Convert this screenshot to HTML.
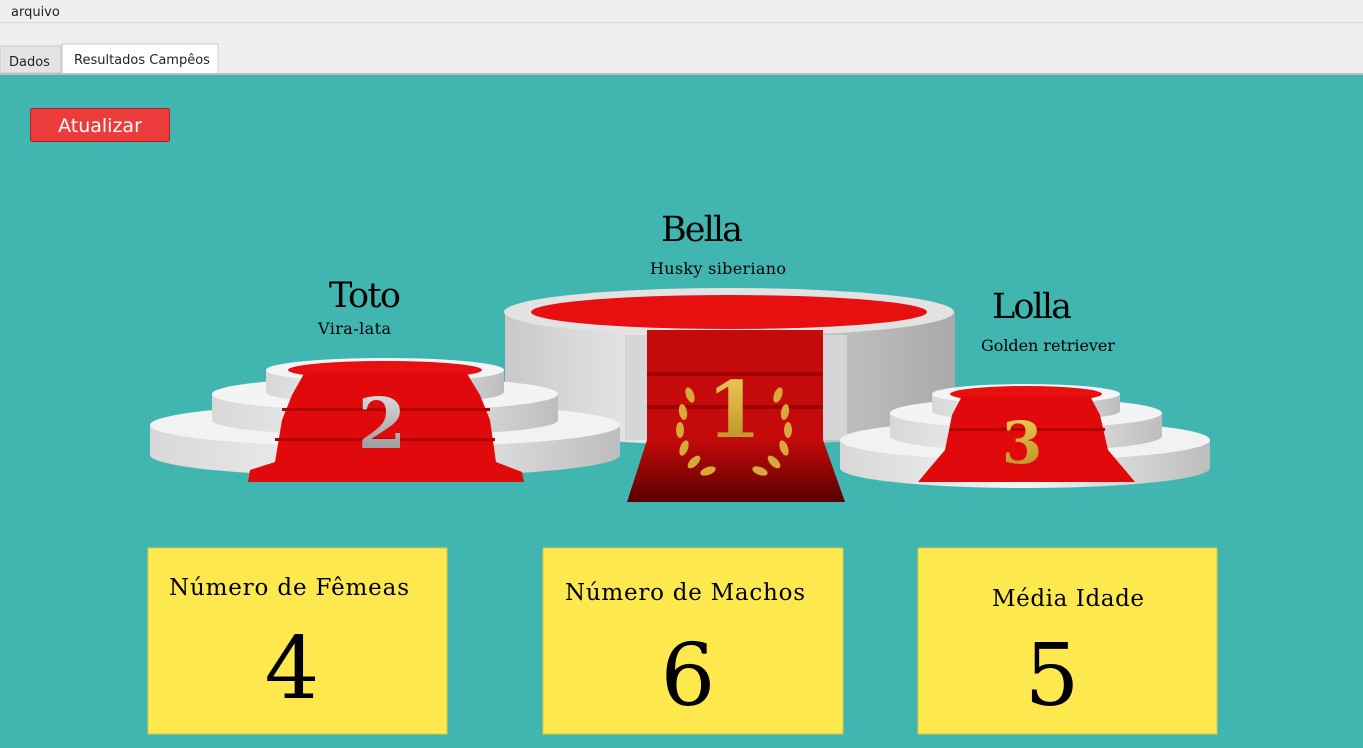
<!DOCTYPE html>
<html><head><meta charset="utf-8"><style>
html,body{margin:0;padding:0;width:1363px;height:748px;overflow:hidden;background:#41b6b1;font-family:"Liberation Sans",sans-serif}
</style></head><body>
<svg width="1363" height="748" viewBox="0 0 1363 748" xmlns="http://www.w3.org/2000/svg" style="position:absolute;left:0;top:0">
<defs>
<linearGradient id="gs" x1="0" x2="1" y1="0" y2="0"><stop offset="0" stop-color="#d8d8d8"/><stop offset=".5" stop-color="#f4f4f4"/><stop offset="1" stop-color="#bdbdbd"/></linearGradient>
<linearGradient id="gc" x1="0" x2="1"><stop offset="0" stop-color="#c9c9c9"/><stop offset=".3" stop-color="#e6e6e6"/><stop offset="1" stop-color="#a9a9a9"/></linearGradient>
<linearGradient id="rc" x1="0" y1="0" x2="0" y2="1"><stop offset="0" stop-color="#c30a0a"/><stop offset="1" stop-color="#5a0000"/></linearGradient>
<linearGradient id="gold" x1="0" y1="0" x2="0" y2="1"><stop offset="0" stop-color="#f2cf5a"/><stop offset="1" stop-color="#b58a20"/></linearGradient>
<linearGradient id="silv" x1="0" y1="0" x2="0" y2="1"><stop offset="0" stop-color="#e8e8e8"/><stop offset="1" stop-color="#8a8a8a"/></linearGradient>
</defs>
<!-- chrome -->
<rect x="0" y="0" width="1363" height="74" fill="#efefef"/>
<line x1="0" y1="22.5" x2="1363" y2="22.5" stroke="#d6d6d6"/>
<text x="11" y="16" font-family="DejaVu Sans, sans-serif" font-size="13" fill="#222">arquivo</text>
<rect x="0" y="46" width="61" height="27" fill="#e4e4e4" stroke="#c8c8c8"/>
<text x="9" y="66" font-family="DejaVu Sans, sans-serif" font-size="13" fill="#222">Dados</text>
<rect x="62" y="44" width="156" height="30" fill="#fff" stroke="#c8c8c8"/>
<text x="74" y="64" font-family="DejaVu Sans, sans-serif" font-size="13" fill="#222">Resultados Campêos</text>
<rect x="0" y="73" width="1363" height="2" fill="#bcbcbc"/>
<rect x="0" y="75" width="1363" height="673" fill="#41b6b1"/>
<!-- button -->
<rect x="30.5" y="108.5" width="139" height="33" rx="2" fill="#ec3b3b" stroke="#b02020"/>
<text x="100" y="132" text-anchor="middle" font-family="DejaVu Sans, sans-serif" font-size="19" fill="#fff">Atualizar</text>

<!-- center podium -->
<path d="M505 312 L505 420 A225 25 0 0 0 955 420 L955 312 Z" fill="url(#gc)"/>
<ellipse cx="729" cy="312" rx="225" ry="24" fill="#e2e2e2"/>
<ellipse cx="729" cy="312" rx="198" ry="17" fill="#e80f10"/>
<rect x="625" y="335" width="222" height="105" fill="#d6d6d6"/>
<rect x="647" y="330" width="176" height="112" fill="#c50a0c"/>
<rect x="647" y="372" width="176" height="4" fill="#a00000"/>
<rect x="647" y="405" width="176" height="4" fill="#a00000"/>
<path d="M647 440 L823 440 L845 502 L627 502 Z" fill="url(#rc)"/>
<!-- laurel -->
<g fill="#d8a838">
<ellipse cx="690" cy="395" rx="4" ry="8" transform="rotate(-20 690 395)"/>
<ellipse cx="683" cy="412" rx="4" ry="8" transform="rotate(-10 683 412)"/>
<ellipse cx="680" cy="430" rx="4" ry="8"/>
<ellipse cx="684" cy="448" rx="4" ry="8" transform="rotate(20 684 448)"/>
<ellipse cx="694" cy="462" rx="4" ry="8" transform="rotate(45 694 462)"/>
<ellipse cx="708" cy="471" rx="4" ry="8" transform="rotate(70 708 471)"/>
<ellipse cx="778" cy="395" rx="4" ry="8" transform="rotate(20 778 395)"/>
<ellipse cx="785" cy="412" rx="4" ry="8" transform="rotate(10 785 412)"/>
<ellipse cx="788" cy="430" rx="4" ry="8"/>
<ellipse cx="784" cy="448" rx="4" ry="8" transform="rotate(-20 784 448)"/>
<ellipse cx="774" cy="462" rx="4" ry="8" transform="rotate(-45 774 462)"/>
<ellipse cx="760" cy="471" rx="4" ry="8" transform="rotate(-70 760 471)"/>
</g>
<text x="734" y="437" text-anchor="middle" font-family="DejaVu Serif, serif" font-weight="bold" font-size="78" fill="url(#gold)">1</text>

<!-- left podium -->
<path d="M150 425 L150 455 A235 22 0 0 0 620 455 L620 425 Z" fill="url(#gs)"/>
<ellipse cx="385" cy="425" rx="235" ry="22" fill="#f2f2f2"/>
<path d="M212 394 L212 420 A173 16 0 0 0 558 420 L558 394 Z" fill="url(#gs)"/>
<ellipse cx="385" cy="394" rx="173" ry="17" fill="#f4f4f4"/>
<path d="M266 370 L266 392 A119 12 0 0 0 504 392 L504 370 Z" fill="url(#gs)"/>
<ellipse cx="385" cy="370" rx="119" ry="12" fill="#f4f4f4"/>
<ellipse cx="385" cy="370" rx="97" ry="9" fill="#e80f10"/>
<path d="M305 372 L466 372 L480 395 L490 420 L496 462 L522 472 L524 482 L248 482 L250 470 L275 462 L282 420 L292 395 Z" fill="#e0090b"/>
<rect x="282" y="408" width="208" height="3" fill="#b50000"/>
<rect x="275" y="438" width="220" height="3" fill="#b50000"/>
<text x="382" y="448" text-anchor="middle" font-family="DejaVu Serif, serif" font-weight="bold" font-size="70" fill="url(#silv)">2</text>

<!-- right podium -->
<path d="M840 440 L840 468 A185 20 0 0 0 1210 468 L1210 440 Z" fill="url(#gs)"/>
<ellipse cx="1025" cy="440" rx="185" ry="20" fill="#f2f2f2"/>
<path d="M890 413 L890 436 A136 15 0 0 0 1162 436 L1162 413 Z" fill="url(#gs)"/>
<ellipse cx="1026" cy="413" rx="136" ry="15" fill="#f4f4f4"/>
<path d="M932 394 L932 411 A94 10 0 0 0 1120 411 L1120 394 Z" fill="url(#gs)"/>
<ellipse cx="1026" cy="394" rx="94" ry="10" fill="#f4f4f4"/>
<ellipse cx="1026" cy="394" rx="76" ry="8" fill="#e80f10"/>
<path d="M962 396 L1090 396 L1100 415 L1108 450 L1125 470 L1135 482 L918 482 L928 470 L945 450 L952 415 Z" fill="#e0090b"/>
<rect x="950" y="428" width="155" height="3" fill="#b50000"/>
<text x="1022" y="463" text-anchor="middle" font-family="DejaVu Serif, serif" font-weight="bold" font-size="58" fill="url(#gold)">3</text>

<!-- names -->
<g font-family="DejaVu Serif, serif" fill="#000">
<text x="661" y="241" font-size="35" textLength="82">Bella</text>
<text x="650" y="274" font-size="16" textLength="136">Husky siberiano</text>
<text x="329" y="307" font-size="35" textLength="72">Toto</text>
<text x="318" y="334" font-size="16" textLength="73">Vira-lata</text>
<text x="992" y="318" font-size="35" textLength="80">Lolla</text>
<text x="981" y="351" font-size="16" textLength="134">Golden retriever</text>
</g>

<!-- cards -->
<g font-family="DejaVu Serif, serif" fill="#000">
<rect x="148" y="548" width="299" height="186" fill="#fde94e" stroke="#e0c840"/>
<text x="169" y="595" font-size="23" textLength="240">Número de Fêmeas</text>
<text x="292" y="698" text-anchor="middle" font-size="86">4</text>
<rect x="543" y="548" width="300" height="186" fill="#fde94e" stroke="#e0c840"/>
<text x="565" y="600" font-size="23" textLength="240">Número de Machos</text>
<text x="688" y="705" text-anchor="middle" font-size="86">6</text>
<rect x="918" y="548" width="299" height="186" fill="#fde94e" stroke="#e0c840"/>
<text x="992" y="606" font-size="23" textLength="152">Média Idade</text>
<text x="1052" y="705" text-anchor="middle" font-size="86">5</text>
</g>
</svg>
</body></html>
